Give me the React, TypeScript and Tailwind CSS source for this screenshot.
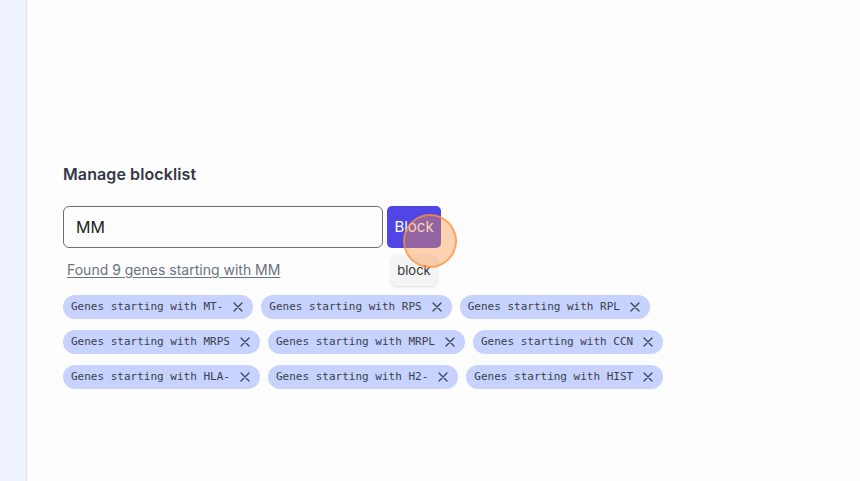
import React from "react";

const chips: string[][] = [
  ["MT-", "RPS", "RPL"],
  ["MRPS", "MRPL", "CCN"],
  ["HLA-", "H2-", "HIST"],
];

function XIcon() {
  return (
    <svg width="10" height="10" viewBox="0 0 10 10" className="shrink-0">
      <path d="M1 1 L9 9 M9 1 L1 9" stroke="#374151" strokeWidth="1.2" strokeLinecap="round" />
    </svg>
  );
}

export default function App() {
  return (
    <div className="flex h-[481px] w-[860px] bg-white" style={{ fontFamily: "Inter, 'Noto Sans', sans-serif" }}>
      <div className="w-[27px] shrink-0 bg-[#eef2ff] border-r border-[#e1e5f6]" />
      <div className="flex-1 pl-[36px] pt-[164px] bg-[#fdfdfd]">
        <h2 className="text-[16px] leading-[20px] font-semibold text-[#333845] tracking-[0.1px]">Manage blocklist</h2>
        <div className="relative mt-[22px] flex gap-[4px]">
          <div className="w-[320px] h-[42px] rounded-[6px] border border-[#6b6f78] flex items-center px-[12px] text-[16px] text-[#222]">
            MM
          </div>
          <div className="relative">
            <button className="w-[54px] h-[42px] rounded-[5px] bg-[#4f46e5] text-white text-[15px]">Block</button>
            <div className="absolute left-[4px] top-[49px] w-[46px] h-[31px] rounded-[5px] bg-[#f3f4f6] shadow-[0_1px_3px_rgba(0,0,0,0.12)] flex items-center justify-center text-[13px] text-[#333]">
              block
            </div>
            <div className="absolute left-[16px] top-[8px] w-[54px] h-[54px] rounded-full bg-[rgba(251,146,60,0.4)] border-2 border-[rgba(251,146,60,0.7)]" />
          </div>
        </div>
        <div className="mt-[12px] pl-[4px] text-[14px] leading-[20px] text-[#6b7280] underline underline-offset-2">
          Found 9 genes starting with MM
        </div>
        <div className="mt-[15px] flex flex-col gap-[11px]">
          {chips.map((row, i) => (
            <div key={i} className="flex gap-[8px]">
              {row.map((c) => (
                <div
                  key={c}
                  className="h-[24px] rounded-full bg-[#c7d2fe] pl-[8px] pr-[10px] flex items-center gap-[10px] text-[11px] text-[#3b3f4a]"
                  style={{ fontFamily: "'DejaVu Sans Mono', monospace" }}
                >
                  <span>Genes starting with {c}</span>
                  <XIcon />
                </div>
              ))}
            </div>
          ))}
        </div>
      </div>
    </div>
  );
}
